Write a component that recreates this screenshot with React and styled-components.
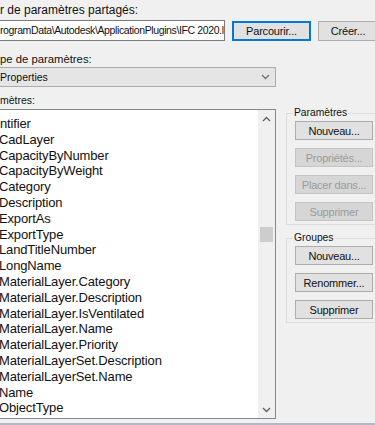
import React from 'react';
import styled, { createGlobalStyle } from 'styled-components';

const GlobalStyle = createGlobalStyle`
  html, body {
    margin: 0;
    padding: 0;
    background: #f0f0f0;
  }
  * {
    box-sizing: border-box;
  }
`;

const Dialog = styled.div`
  width: 375px;
  height: 425px;
  overflow: hidden;
  background: #f0f0f0;
  border-bottom: 2px solid #b4b8c0;
  font-family: 'Liberation Sans', Arial, sans-serif;
  font-size: 11px;
  color: #111;
  padding-top: 3px;
  display: flex;
  flex-direction: column;
`;

const Label = styled.div`
  height: 14px;
  line-height: 14px;
  font-size: ${(p) => p.$size || 11}px;
  margin-top: ${(p) => p.$top || 0}px;
  white-space: nowrap;
`;

const PathRow = styled.div`
  display: flex;
  gap: 7px;
  margin-top: 3px;
  height: 21px;
  align-items: center;
`;

const TextBox = styled.div`
  width: 225px;
  height: 21px;
  flex-shrink: 0;
  background: #fff;
  border: 1px solid #7a7a7a;
  border-left: none;
  font-size: 10.5px;
  letter-spacing: -0.38px;
  line-height: 19px;
  white-space: nowrap;
  overflow: hidden;
`;

const Button = styled.button`
  flex-shrink: 0;
  width: ${(p) => p.$w || 78}px;
  height: ${(p) => p.$h || 19}px;
  padding: 0;
  font-family: inherit;
  font-size: 11px;
  letter-spacing: -0.2px;
  background: ${(p) => (p.disabled ? '#d6d6d6' : '#e1e1e1')};
  border: 1px solid ${(p) => (p.$focus ? '#0078d7' : p.disabled ? '#c4c4c4' : '#adadad')};
  box-shadow: ${(p) => (p.$focus ? 'inset 0 0 0 1px #0078d7' : 'none')};
  color: ${(p) => (p.disabled ? '#9a9a9a' : '#111')};
  white-space: nowrap;
  text-align: center;
`;

const Select = styled.div`
  margin-top: 1px;
  width: 276px;
  height: 20px;
  background: #e5e5e5;
  border: 1px solid #acacac;
  border-left: none;
  display: flex;
  align-items: center;
  justify-content: space-between;
  padding-right: 5px;
  font-size: 10.5px;
  line-height: 18px;
`;

const Main = styled.div`
  margin-top: 2px;
  display: grid;
  grid-template-columns: 276px 1fr;
  column-gap: 10px;
`;

const ListBox = styled.div`
  height: 310px;
  background: #fff;
  border: 1px solid #828790;
  border-left: none;
  display: flex;
`;

const Items = styled.ul`
  flex: 1;
  list-style: none;
  margin: 0;
  padding: 6px 0 0 0;
  overflow: hidden;
`;

const Item = styled.li`
  height: 15.8px;
  line-height: 15.8px;
  font-size: 13px;
  letter-spacing: -0.15px;
  white-space: nowrap;
  text-indent: ${(p) => p.$indent || 0}px;
`;

const ScrollBar = styled.div`
  width: 17px;
  background: #f0f0f0;
  display: flex;
  flex-direction: column;
`;

const Arrow = styled.div`
  height: 17px;
  display: flex;
  align-items: center;
  justify-content: center;
`;

const Track = styled.div`
  flex: 1;
  padding-top: 100px;
  display: flex;
  justify-content: center;
`;

const Thumb = styled.div`
  width: 13px;
  height: 15px;
  background: #cdcdcd;
`;

const Side = styled.div`
  margin-top: -3px;
  display: flex;
  flex-direction: column;
  gap: 6px;
`;

const Group = styled.fieldset`
  margin: 0;
  margin-right: -20px;
  padding: 1px 0 3px 8px;
  border: 1px solid #dcdcdc;
  border-radius: 0;
  display: flex;
  flex-direction: column;
  gap: 8px;

  legend {
    padding: 0 1px;
    margin-left: -2px;
    font-size: 10.3px;
    line-height: 14px;
  }
`;

const Chevron = ({ up, color = '#606060', w = 9 }) => (
  <svg width={w} height="6" viewBox="0 0 9 6">
    <path
      d={up ? 'M1 5 L4.5 1.5 L8 5' : 'M1 1 L4.5 4.5 L8 1'}
      fill="none"
      stroke={color}
      strokeWidth="1.3"
    />
  </svg>
);

const params = [
  'ntifier',
  'CadLayer',
  'CapacityByNumber',
  'CapacityByWeight',
  'Category',
  'Description',
  'ExportAs',
  'ExportType',
  'LandTitleNumber',
  'LongName',
  'MaterialLayer.Category',
  'MaterialLayer.Description',
  'MaterialLayer.IsVentilated',
  'MaterialLayer.Name',
  'MaterialLayer.Priority',
  'MaterialLayerSet.Description',
  'MaterialLayerSet.Name',
  'Name',
  'ObjectType',
];

const App = () => {
  return (
    <>
      <GlobalStyle />
      <Dialog>
        <Label $size={12}>r de paramètres partagés:</Label>
        <PathRow>
          <TextBox>rogramData\Autodesk\ApplicationPlugins\IFC 2020.l</TextBox>
          <Button $w={79} $h={20} $focus>
            Parcourir...
          </Button>
          <Button $w={60} $h={20}>
            Créer...
          </Button>
        </PathRow>
        <Label $top={11} $size={11.3}>pe de paramètres:</Label>
        <Select>
          <span>Properties</span>
          <Chevron color="#707070" />
        </Select>
        <Label $top={6} $size={10.5}>mètres:</Label>
        <Main>
          <ListBox>
            <Items>
              {params.map((p, i) => (
                <Item key={p} $indent={i === 0 ? 0 : -1}>
                  {p}
                </Item>
              ))}
            </Items>
            <ScrollBar>
              <Arrow>
                <Chevron up />
              </Arrow>
              <Track>
                <Thumb />
              </Track>
              <Arrow>
                <Chevron />
              </Arrow>
            </ScrollBar>
          </ListBox>
          <Side>
            <Group>
              <legend>Paramètres</legend>
              <Button>Nouveau...</Button>
              <Button disabled>Propriétés...</Button>
              <Button disabled>Placer dans...</Button>
              <Button disabled>Supprimer</Button>
            </Group>
            <Group>
              <legend>Groupes</legend>
              <Button>Nouveau...</Button>
              <Button>Renommer...</Button>
              <Button>Supprimer</Button>
            </Group>
          </Side>
        </Main>
      </Dialog>
    </>
  );
};

export default App;
